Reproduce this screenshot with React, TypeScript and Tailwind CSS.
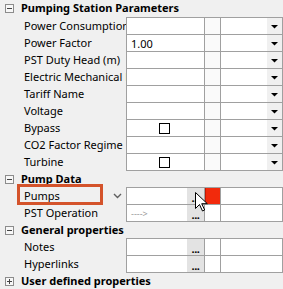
import React from "react";

type Kind = "drop" | "check" | "dots" | "pumps" | "op";

const rows1: { label: string; kind: Kind; value?: string }[] = [
	{ label: "Power Consumption", kind: "drop" },
	{ label: "Power Factor", kind: "drop", value: "1.00" },
	{ label: "PST Duty Head (m)", kind: "drop" },
	{ label: "Electric Mechanical Efficiency", kind: "drop" },
	{ label: "Tariff Name", kind: "drop" },
	{ label: "Voltage", kind: "drop" },
	{ label: "Bypass", kind: "check" },
	{ label: "CO2 Factor Regime", kind: "drop" },
	{ label: "Turbine", kind: "check" },
];

const DropArrow = () => (
	<svg width="7" height="5" viewBox="0 0 7 5">
		<path d="M0 1h7L3.5 4.5z" fill="#000" />
	</svg>
);

const Dots = () => (
	<div className="w-[17px] shrink-0 bg-[#e3e3e3] flex items-end justify-center pb-[1px] text-[11px] font-bold leading-none tracking-[-0.5px]">
		...
	</div>
);

const ToggleBox = ({ open }: { open: boolean }) => (
	<div className="ml-[5px] w-[9px] h-[9px] border border-[#8c8c8c] bg-[#f7f7f7] flex items-center justify-center shrink-0">
		<div className="relative w-[5px] h-[1px] bg-[#444]">
			{!open && <div className="absolute left-[2px] top-[-2px] w-[1px] h-[5px] bg-[#444]" />}
		</div>
	</div>
);

const GroupHeader = ({
	title,
	open = true,
	first,
}: {
	title: string;
	open?: boolean;
	first?: boolean;
}) => (
	<div
		className={`${first ? "h-[17px]" : "h-[16px]"} flex items-center whitespace-nowrap overflow-hidden`}
	>
		<ToggleBox open={open} />
		<span className="ml-[7px] font-bold text-black">{title}</span>
	</div>
);

const Row = ({
	label,
	kind,
	value,
	last,
}: {
	label: string;
	kind: Kind;
	value?: string;
	last?: boolean;
}) => (
	<div className={`flex ${last ? "h-[18px]" : "h-[17px]"} relative`}>
		<div className="w-[126px] shrink-0 pl-[24px] overflow-hidden whitespace-nowrap leading-[17px] text-black relative">
			{label}
			{kind === "pumps" && (
				<svg className="absolute left-[113px] top-[6px]" width="9" height="6" viewBox="0 0 9 6">
					<path d="M1 1l3.5 3.5L8 1" stroke="#606060" strokeWidth="1.4" fill="none" />
				</svg>
			)}
		</div>
		<div
			className={`flex-1 flex border-l border-t border-r border-[#a0a0a0] ${last ? "border-b" : ""}`}
		>
			<div className="w-[78px] shrink-0 flex bg-white border-r border-[#a0a0a0]">
				<div className="flex-1 flex items-center justify-center overflow-hidden">
					{value && <span className="w-full pl-[4px] leading-[15px]">{value}</span>}
					{kind === "check" && (
						<div className="w-[11px] h-[11px] border border-black bg-white ml-[-2px]" />
					)}
					{kind === "op" && (
						<span className="w-full pl-[4px] text-[9px] text-[#9a9a9a] leading-[15px]">----&gt;</span>
					)}
				</div>
				{(kind === "dots" || kind === "pumps" || kind === "op") && <Dots />}
			</div>
			<div
				className={`w-[16px] shrink-0 border-r border-[#a0a0a0] ${
					kind === "pumps"
						? "bg-[#f22a0c] border-l border-l-[#c01a05]"
						: kind === "drop" || kind === "check"
							? "bg-[#fafafa]"
							: "bg-white"
				}`}
			/>
			<div className="flex-1 bg-white" />
			{(kind === "drop" || kind === "check") && (
				<div className="w-[15px] shrink-0 bg-[#f0f0f0] flex items-center justify-center">
					<DropArrow />
				</div>
			)}
		</div>
		{kind === "pumps" && (
			<div className="absolute left-[17px] top-[-3px] w-[86px] h-[21px] border-[3px] border-[#d4532b]" />
		)}
	</div>
);

export default function App() {
	return (
		<div
			className="w-[283px] h-[289px] overflow-hidden bg-[#f0f0f0] text-[11px] text-black relative"
			style={{ fontFamily: '"Segoe UI", "Noto Sans", sans-serif' }}
		>
			<GroupHeader title="Pumping Station Parameters" first />
			{rows1.map((r, i) => (
				<Row key={r.label} {...r} last={i === rows1.length - 1} />
			))}
			<GroupHeader title="Pump Data" />
			<Row label="Pumps" kind="pumps" />
			<Row label="PST Operation" kind="op" last />
			<GroupHeader title="General properties" />
			<Row label="Notes" kind="dots" />
			<Row label="Hyperlinks" kind="dots" last />
			<GroupHeader title="User defined properties" open={false} />
			<svg
				className="absolute left-[195px] top-[192px]"
				width="13"
				height="20"
				viewBox="0 0 13 20"
			>
				<path
					d="M0.5 0.5v16l4-4 3 6.5 2.2-1-3-6.3h5.6z"
					fill="#fff"
					stroke="#000"
					strokeWidth="1"
					strokeLinejoin="round"
				/>
			</svg>
		</div>
	);
}
